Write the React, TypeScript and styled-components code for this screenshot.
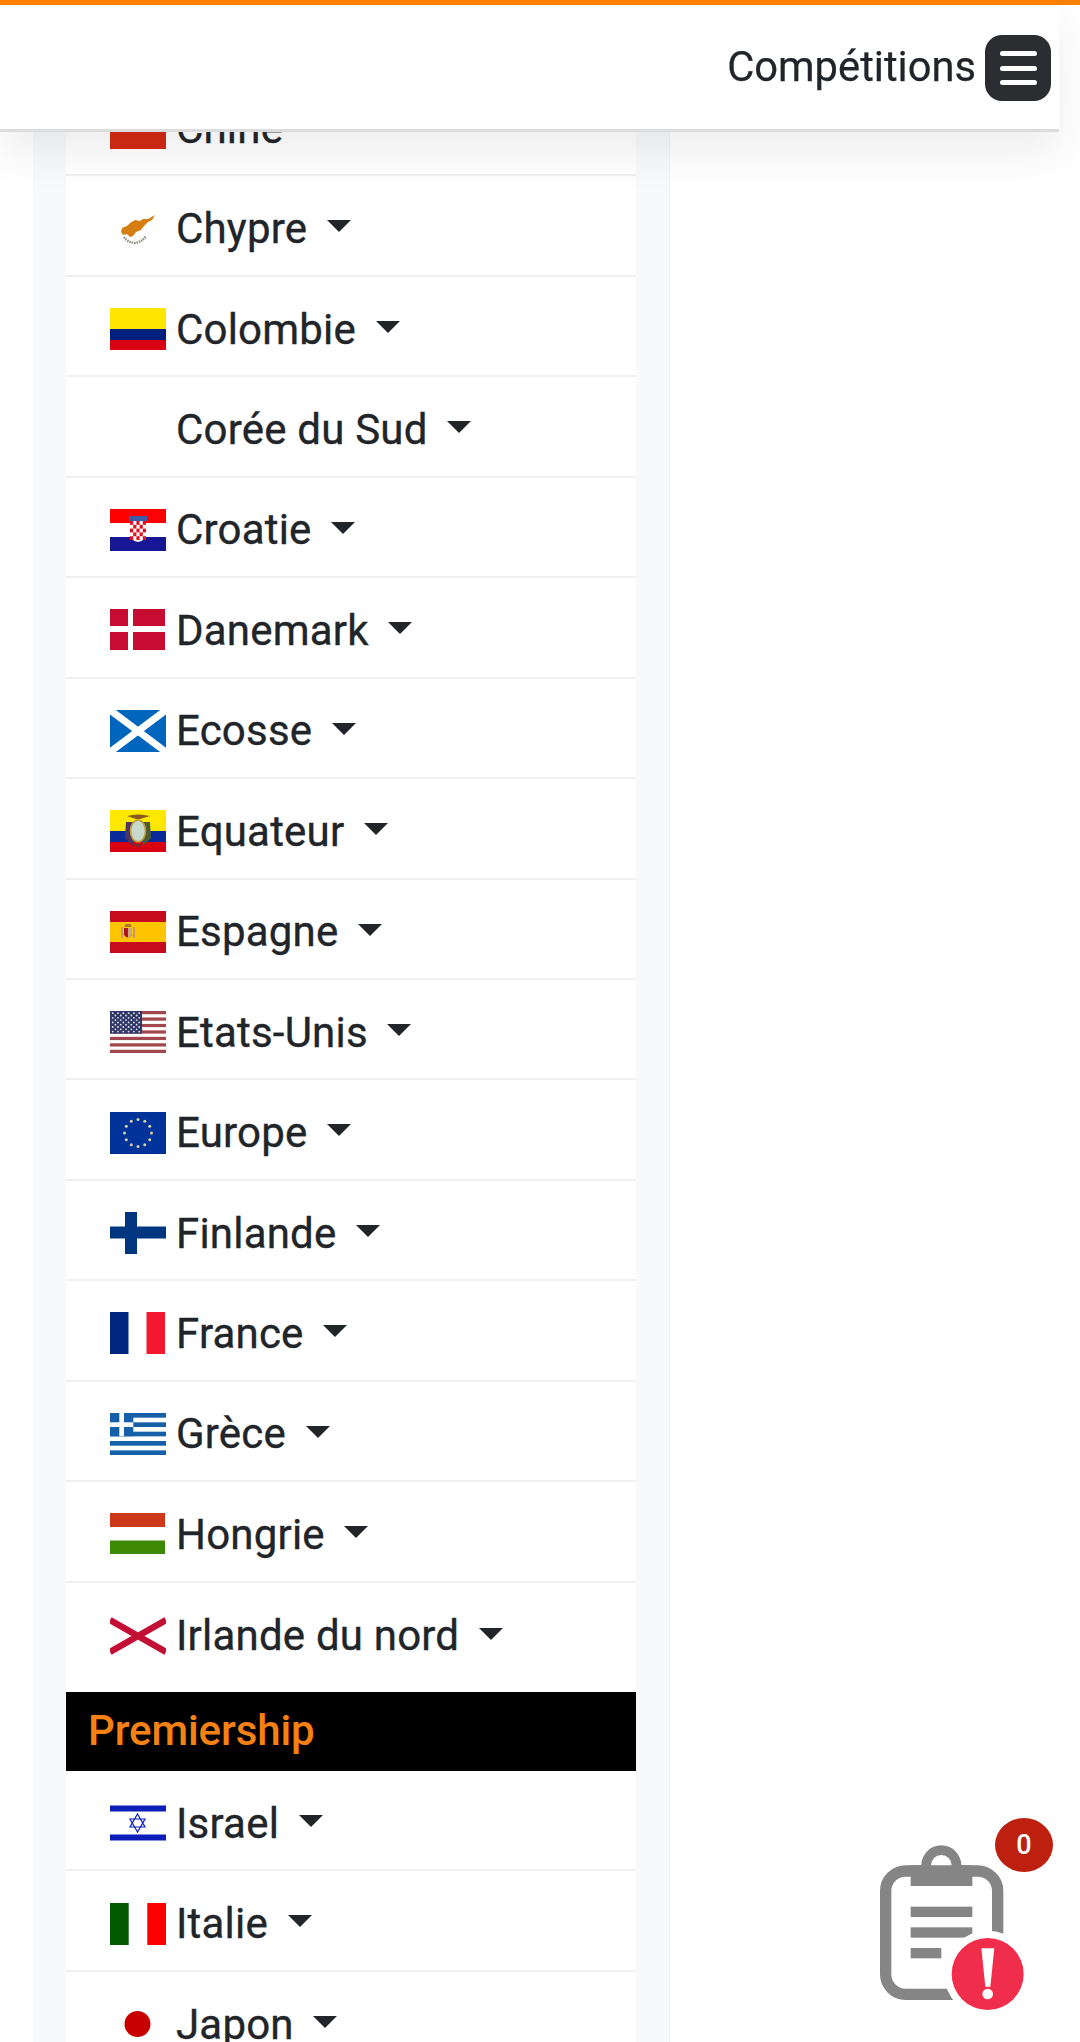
import React, { ReactNode } from 'react'
import styled, { createGlobalStyle } from 'styled-components'

const GlobalStyle = createGlobalStyle`
  html, body {
    margin: 0;
    padding: 0;
    background: #fff;
    overflow: hidden;
  }
  body {
    font-family: Roboto, "Liberation Sans", sans-serif;
    color: #212529;
  }
`

const Page = styled.div`
  display: flex;
  height: 2042px;
  overflow: hidden;
  padding-left: 33px;
`

const Sidebar = styled.aside`
  width: 570px;
  padding: 76px 33px 0;
  background: #f8f9fa;
  border-right: 1px solid #f0f1f3;
`

const TopStrip = styled.div`
  position: fixed;
  z-index: 3;
  top: 0;
  left: 0;
  width: 100%;
  height: 5px;
  background: #ff8000;
`

const Navbar = styled.header`
  position: fixed;
  z-index: 2;
  top: 0;
  left: 0;
  box-sizing: border-box;
  width: 1059px;
  height: 132px;
  padding: 35px 8px 0 0;
  display: flex;
  justify-content: flex-end;
  align-items: flex-start;
  gap: 9px;
  background: #fff;
  border-bottom: 3px solid #dcdcdc;
  box-shadow: 0 21px 42px rgba(0, 0, 0, 0.07);
`

const NavTitle = styled.span`
  font-size: 41.7px;
  line-height: 63px;
  -webkit-text-stroke: 0.25px;
`

const MenuButton = styled.button`
  width: 66px;
  height: 66px;
  padding: 0;
  border: 0;
  border-radius: 17px;
  background: #2b2d31;
  display: flex;
  flex-direction: column;
  align-items: center;
  justify-content: center;
  gap: 9.5px;
`

const MenuBar = styled.i`
  display: block;
  width: 37px;
  height: 5px;
  border-radius: 3px;
  background: #fff;
`

const List = styled.ul`
  list-style: none;
  margin: 0;
  padding: 0 0 9px;
  background: #fff;
`

const Row = styled.li<{ $plain?: boolean }>`
  box-sizing: border-box;
  height: 100.45px;
  padding: 6px 0 0 44px;
  display: flex;
  align-items: center;
  gap: 10px;
  background: #fff;
  border-bottom: ${(p) => (p.$plain ? '0' : '2px solid #f0f0f0')};
`

const Label = styled.span`
  font-size: 42px;
  line-height: 63px;
  letter-spacing: 0.2px;
  white-space: pre;
  -webkit-text-stroke: 0.35px;
`

const Caret = styled.span`
  display: inline-block;
  margin-left: 9px;
  vertical-align: 10.7px;
  border-top: 12px solid #212529;
  border-left: 12px solid transparent;
  border-right: 12px solid transparent;
`

const Heading = styled.div`
  box-sizing: border-box;
  height: 79px;
  padding: 0 0 2px 22px;
  display: flex;
  align-items: center;
  background: #000;
  color: #f58113;
  font-size: 42px;
  font-weight: 500;
  letter-spacing: -0.1px;
`

const FlagSvg = styled.svg`
  flex: none;
  display: block;
  width: 56px;
  height: 42px;
`

const Notes = styled.div`
  position: fixed;
  z-index: 4;
  right: 0;
  bottom: 0;
  width: 240px;
  height: 252px;
`

const NotesIcon = styled.svg`
  display: block;
  width: 240px;
  height: 252px;
`

const Badge = styled.span`
  position: absolute;
  top: 28px;
  left: 155px;
  width: 58px;
  height: 54px;
  border-radius: 50%;
  background: #bd200e;
  color: #fff;
  font-size: 27px;
  font-weight: 500;
  line-height: 54px;
  text-align: center;
`

// stars on the US flag canton, staggered rows
const usStars: [number, number][] = []
for (let r = 0; r < 9; r++) {
  const count = r % 2 === 0 ? 6 : 5
  for (let c = 0; c < count; c++) {
    usStars.push([(r % 2 === 0 ? 2.7 : 5.4) + c * 5.3, 2.2 + r * 2.3])
  }
}

const euStars = Array.from({ length: 12 }, (_, i) => {
  const a = (i * Math.PI) / 6
  return [28 + 13.5 * Math.sin(a), 21 - 13.5 * Math.cos(a)]
})

// Croatian shield squares
const shield: [number, number][] = []
for (let r = 0; r < 5; r++) {
  for (let c = 0; c < 5; c++) if ((r + c) % 2 === 0) shield.push([c, r])
}

const flags: Record<string, ReactNode> = {
  china: <rect width="56" height="42" fill="#d32a13" />,
  cyprus: (
    <>
      <path
        d="M45 7 L38 11 L33 11 L30 13 L25 12 L20 15 L17 18 L12 20 L11 24 L13 27 L17 26 L20 29 L23 28 L26 24 L31 22 L34 18 L38 14 L42 12 Z"
        fill="#d57d10"
      />
      <path d="M14 29 Q17 34 25 35 Q32 34 36 28" fill="none" stroke="#7f8a70" strokeWidth="2.4" strokeDasharray="1.4 1" />
    </>
  ),
  colombia: (
    <>
      <rect width="56" height="21" fill="#ffe600" />
      <rect y="21" width="56" height="11" fill="#00207f" />
      <rect y="32" width="56" height="10" fill="#d80012" />
    </>
  ),
  korea: null,
  croatia: (
    <>
      <rect width="56" height="14" fill="#ff0000" />
      <rect y="28" width="56" height="14" fill="#171796" />
      <path d="M19 7 L37 7 L37 12 L19 12 Z" fill="#3a5ca8" />
      <path d="M20 12 H36 V24 Q36 32 28 33 Q20 32 20 24 Z" fill="#fff" />
      {shield.map(([c, r]) => (
        <rect key={`${c}-${r}`} x={20 + c * 3.2} y={12 + r * 3.8} width="3.2" height="3.8" fill="#e01020" />
      ))}
    </>
  ),
  denmark: (
    <path d="M0 0 H18 V17 H0 Z M23 0 H55 V17 H23 Z M0 23 H18 V41 H0 Z M23 23 H55 V41 H23 Z" fill="#c60c30" />
  ),
  scotland: (
    <>
      <rect width="56" height="42" fill="#0065bd" />
      <path d="M0 0 L56 42 M56 0 L0 42" stroke="#fff" strokeWidth="7" />
    </>
  ),
  ecuador: (
    <>
      <rect width="56" height="21" fill="#ffe800" />
      <rect y="21" width="56" height="11" fill="#0a2a9a" />
      <rect y="32" width="56" height="10" fill="#d90012" />
      <path d="M17 6 Q28 3 40 6 L30 9 L26 9 Z" fill="#8a5a20" />
      <path d="M16 12 L15 28 L23 36 L24 12 Z" fill="#4c3560" />
      <path d="M40 12 L41 28 L33 36 L32 12 Z" fill="#4c5a30" />
      <ellipse cx="28" cy="21" rx="7.5" ry="11" fill="#c9d8cc" stroke="#c09a3a" strokeWidth="1.6" />
      <path d="M24 34 L32 34 L28 38 Z" fill="#7a2a2a" />
    </>
  ),
  spain: (
    <>
      <rect width="56" height="11" fill="#c60b1e" />
      <rect y="11" width="56" height="20" fill="#ffc400" />
      <rect y="31" width="56" height="11" fill="#c60b1e" />
      <path d="M11 16 H13 V27 H11 Z M23 16 H25 V27 H23 Z" fill="#c79a6a" />
      <path d="M14 17 H22 V24 Q18 29 14 24 Z" fill="#ad1519" />
      <path d="M18 17 H22 V24 Q20 27 18 26.5 Z" fill="#d0a880" />
      <path d="M14.5 16 H21.5 L20.5 13 H15.5 Z" fill="#a8782a" />
    </>
  ),
  usa: (
    <>
      {Array.from({ length: 7 }, (_, i) => (
        <rect key={i} y={i * 6.46} width="56" height="3.23" fill="#a2474e" />
      ))}
      <rect width="32" height="22.6" fill="#2f3768" />
      {usStars.map(([x, y]) => (
        <circle key={`${x}-${y}`} cx={x} cy={y} r="0.9" fill="#e8e8f0" />
      ))}
    </>
  ),
  europe: (
    <>
      <rect width="56" height="42" fill="#003399" />
      {euStars.map(([x, y]) => (
        <circle key={`${x}-${y}`} cx={x} cy={y} r="1.5" fill="#d8d2a0" />
      ))}
    </>
  ),
  finland: <path d="M15 0 H27 V14.5 H56 V26.5 H27 V42 H15 V26.5 H0 V14.5 H15 Z" fill="#003580" />,
  france: (
    <>
      <rect width="18.5" height="42" fill="#002680" />
      <rect x="36.5" width="18.5" height="42" fill="#f31830" />
    </>
  ),
  greece: (
    <>
      <rect width="56" height="42" fill="#1560a8" />
      {[1, 3, 5, 7].map((i) => (
        <rect key={i} y={i * 4.67} width="56" height="4.67" fill="#fff" />
      ))}
      <rect width="23.3" height="23.3" fill="#1560a8" />
      <rect x="9.3" width="4.7" height="23.3" fill="#fff" />
      <rect y="9.3" width="23.3" height="4.7" fill="#fff" />
    </>
  ),
  hungary: (
    <>
      <rect width="55" height="14" fill="#cd3a1b" />
      <rect y="27.5" width="55" height="13.5" fill="#3f8a05" />
    </>
  ),
  northernIreland: <path d="M0 5 L56 37 M56 5 L0 37" stroke="#c20f33" strokeWidth="6.5" />,
  israel: (
    <>
      <rect y="3.5" width="56" height="6" fill="#0b1fb8" />
      <rect y="32.5" width="56" height="6" fill="#0b1fb8" />
      <path
        d="M27.5 12 L35 25 H20 Z M27.5 30 L20 17 H35 Z"
        fill="none"
        stroke="#0b1fb8"
        strokeWidth="1.2"
      />
    </>
  ),
  italy: (
    <>
      <rect width="18.7" height="42" fill="#035a03" />
      <rect x="37.3" width="18.7" height="42" fill="#ff0000" />
    </>
  ),
  japan: <circle cx="27.5" cy="21" r="13" fill="#c80000" />,
}

function Flag({ code }: { code: string }) {
  return <FlagSvg viewBox="0 0 56 42">{flags[code]}</FlagSvg>
}

const firstGroup = [
  ['china', 'Chine'],
  ['cyprus', 'Chypre'],
  ['colombia', 'Colombie'],
  ['korea', 'Corée du Sud'],
  ['croatia', 'Croatie'],
  ['denmark', 'Danemark'],
  ['scotland', 'Ecosse'],
  ['ecuador', 'Equateur'],
  ['spain', 'Espagne'],
  ['usa', 'Etats-Unis'],
  ['europe', 'Europe'],
  ['finland', 'Finlande'],
  ['france', 'France'],
  ['greece', 'Grèce'],
  ['hungary', 'Hongrie'],
  ['northernIreland', 'Irlande du nord'],
]

const secondGroup = [
  ['israel', 'Israel'],
  ['italy', 'Italie'],
  ['japan', 'Japon'],
]

function Country({ code, name, plain }: { code: string; name: string; plain?: boolean }) {
  return (
    <Row $plain={plain}>
      <Flag code={code} />
      <Label>
        {name} <Caret />
      </Label>
    </Row>
  )
}

export default function App() {
  return (
    <>
      <GlobalStyle />
      <TopStrip />
      <Navbar>
        <NavTitle>Compétitions</NavTitle>
        <MenuButton aria-label="Menu">
          <MenuBar />
          <MenuBar />
          <MenuBar />
        </MenuButton>
      </Navbar>
      <Page>
        <Sidebar>
          <List>
            {firstGroup.map(([code, name], i) => (
              <Country key={code} code={code} name={name} plain={i === firstGroup.length - 1} />
            ))}
          </List>
          <Heading>Premiership</Heading>
          <List>
            {secondGroup.map(([code, name]) => (
              <Country key={code} code={code} name={name} />
            ))}
          </List>
        </Sidebar>
      </Page>
      <Notes>
        <NotesIcon viewBox="0 0 720 756">
          <rect x="137" y="243" width="336" height="370" rx="60" fill="#fff" stroke="#858585" strokeWidth="34" />
          <path
            fillRule="evenodd"
            d="M212 226 H244 A60 60 0 0 1 364 226 H397 V288 H212 Z M304 195 A31 31 0 1 0 304 257 A31 31 0 1 0 304 195 Z"
            fill="#858585"
          />
          <rect x="212" y="350" width="185" height="31" fill="#858585" />
          <rect x="212" y="412" width="185" height="31" fill="#858585" />
          <rect x="212" y="474" width="92" height="31" fill="#858585" />
          <circle cx="443" cy="552" r="130" fill="#fff" />
          <circle cx="443" cy="552" r="108" fill="#f02d4b" />
          <path d="M424 475 H463 L451 590 H436 Z" fill="#fff" />
          <circle cx="443" cy="612" r="16" fill="#fff" />
        </NotesIcon>
        <Badge>0</Badge>
      </Notes>
    </>
  )
}
